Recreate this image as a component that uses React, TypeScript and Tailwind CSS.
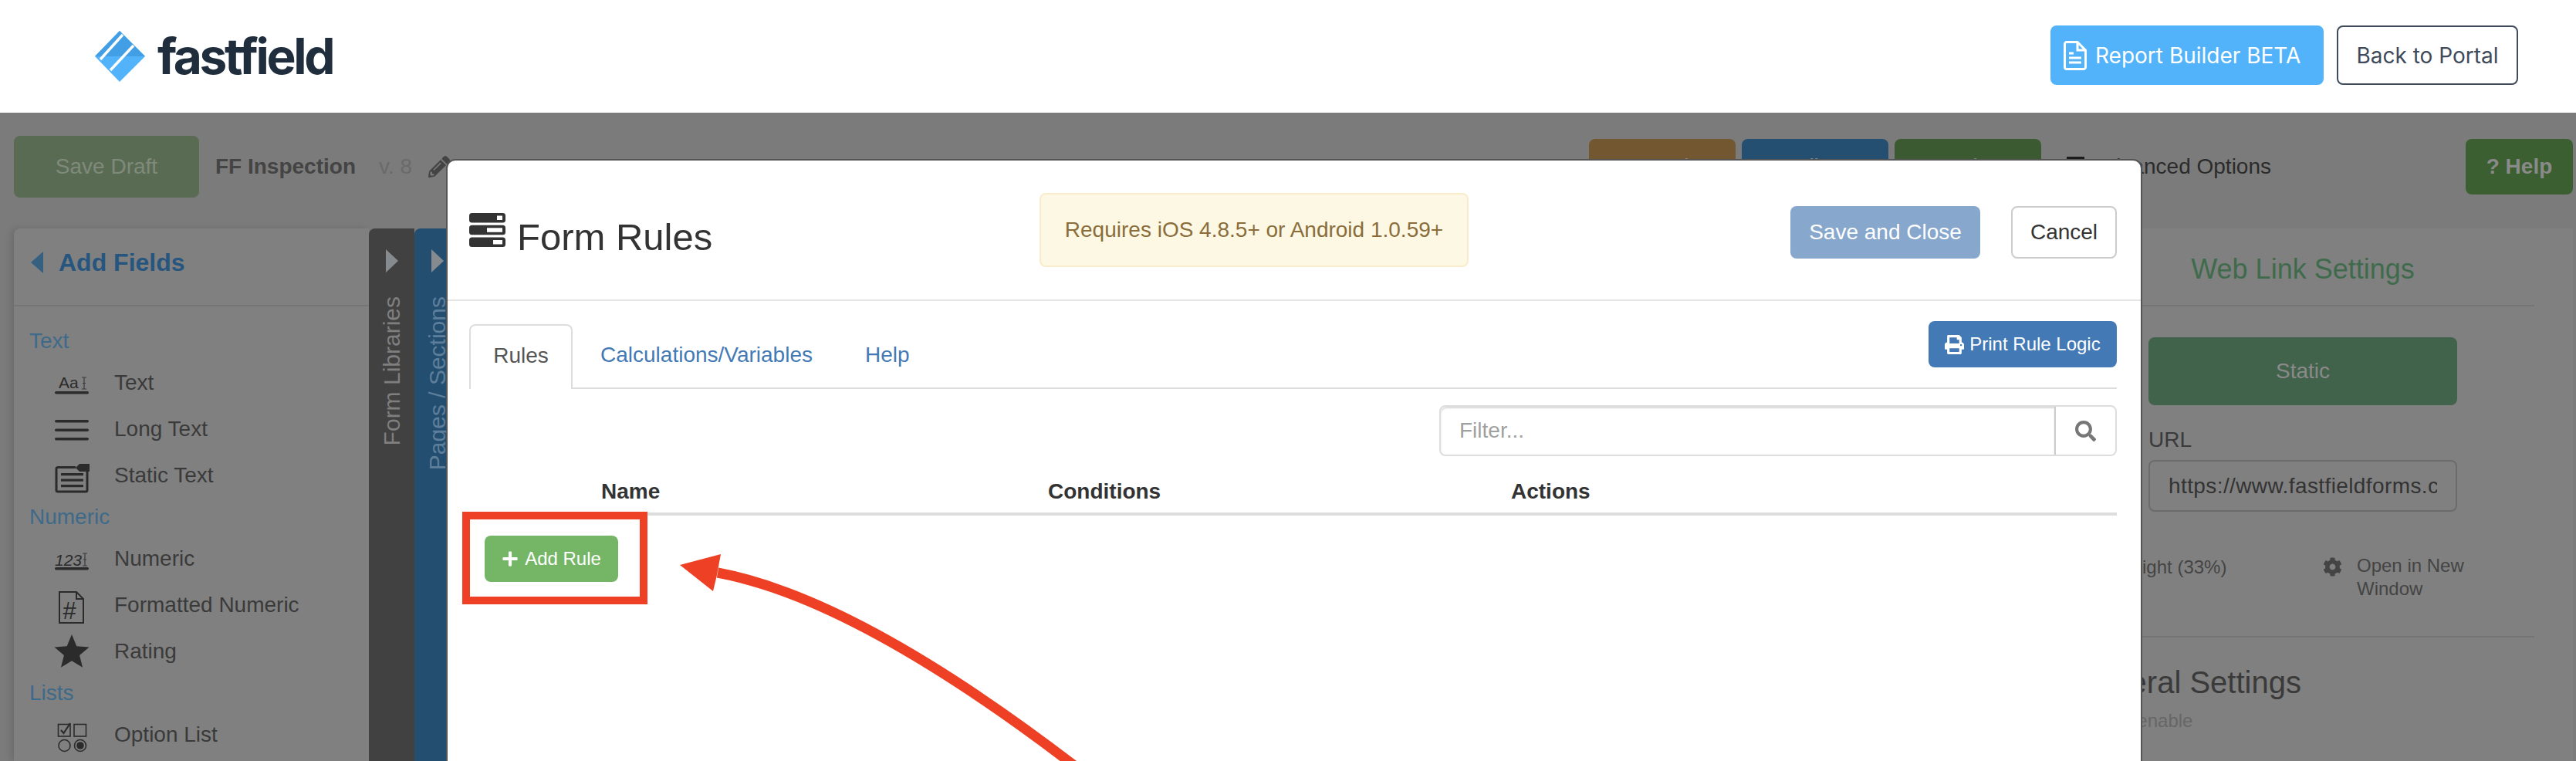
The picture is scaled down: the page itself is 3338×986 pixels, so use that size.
import { FC } from 'react';
import { FaCog, FaPencilAlt, FaPlus, FaPrint, FaSearch } from 'react-icons/fa';

type FieldIcon = 'aa' | 'lines' | 'static' | 'num' | 'hash' | 'star' | 'options';

const fieldGroups: { label: string; items: { name: string; icon: FieldIcon }[] }[] = [
  {
    label: 'Text',
    items: [
      { name: 'Text', icon: 'aa' },
      { name: 'Long Text', icon: 'lines' },
      { name: 'Static Text', icon: 'static' },
    ],
  },
  {
    label: 'Numeric',
    items: [
      { name: 'Numeric', icon: 'num' },
      { name: 'Formatted Numeric', icon: 'hash' },
      { name: 'Rating', icon: 'star' },
    ],
  },
  {
    label: 'Lists',
    items: [{ name: 'Option List', icon: 'options' }],
  },
];

const IBeam: FC<{ x: number; top: number; bottom: number }> = ({ x, top, bottom }) => (
  <path
    d={`M${x - 3} ${top}h6M${x} ${top}V${bottom}M${x - 3} ${bottom}h6M${x - 2} ${(top + bottom) / 2}h4`}
    stroke="#3a3a3a"
    strokeWidth="1.2"
    fill="none"
  />
);

const FieldGlyph: FC<{ icon: FieldIcon }> = ({ icon }) => (
  <svg width="48" height="48" viewBox="0 0 48 48" fill="#2b2b2b" className="shrink-0">
    {icon === 'aa' && (
      <>
        <text x="6" y="31" fontSize="21" fontFamily="Liberation Sans" fill="#2b2b2b">Aa</text>
        <IBeam x={39} top={17} bottom={32} />
        <rect x="1" y="35" width="44" height="3.6" rx="1.8" />
      </>
    )}
    {icon === 'lines' && (
      <>
        <rect x="1" y="12" width="44" height="3.6" rx="1.8" />
        <rect x="1" y="23.5" width="44" height="3.6" rx="1.8" />
        <rect x="1" y="35" width="44" height="3.6" rx="1.8" />
      </>
    )}
    {icon === 'static' && (
      <>
        <path d="M28 13.5H5a2 2 0 0 0-2 2V43a2 2 0 0 0 2 2h36a2 2 0 0 0 2-2V19" fill="none" stroke="#2b2b2b" strokeWidth="3" />
        <rect x="9" y="21" width="29" height="3.2" />
        <rect x="9" y="28.5" width="29" height="3.2" />
        <rect x="9" y="36" width="29" height="3.2" />
        <path d="M28 14l5-5h13v10H33z" />
      </>
    )}
    {icon === 'num' && (
      <>
        <text x="1" y="33" fontSize="21" fontStyle="italic" fontFamily="Liberation Sans" fill="#2b2b2b">123</text>
        <IBeam x={40} top={17} bottom={33} />
        <rect x="1" y="35" width="44" height="3.6" rx="1.8" />
      </>
    )}
    {icon === 'hash' && (
      <>
        <path d="M7 7h22l9 9v31H7zM29 7v9h9" fill="none" stroke="#2b2b2b" strokeWidth="2" />
        <text x="11" y="42" fontSize="31" fontStyle="italic" fontFamily="Liberation Sans" fill="#2b2b2b">#</text>
      </>
    )}
    {icon === 'star' && <path d="M23 2l6.3 15.2 16.2 1.2-12.4 10.5 3.9 15.9L23 36.3 9 44.8l3.9-15.9L.5 18.4l16.2-1.2z" />}
    {icon === 'options' && (
      <>
        <rect x="5.5" y="10.5" width="15.5" height="15.5" fill="none" stroke="#2b2b2b" strokeWidth="1.6" />
        <path d="M9 18l3.5 4L21 9" fill="none" stroke="#2b2b2b" strokeWidth="2.2" />
        <rect x="26" y="10.5" width="15.5" height="15.5" fill="none" stroke="#2b2b2b" strokeWidth="1.6" />
        <circle cx="13.5" cy="38" r="7.5" fill="none" stroke="#2b2b2b" strokeWidth="1.6" />
        <circle cx="34" cy="38" r="7.5" fill="none" stroke="#2b2b2b" strokeWidth="1.6" />
        <circle cx="34" cy="38" r="4.8" />
      </>
    )}
  </svg>
);

const Logo: FC = () => (
  <div className="flex items-center">
    <svg width="66" height="66" viewBox="0 0 66 66">
      <path d="M32 0 L65 33 L32 66 L0 33 Z" fill="#52b3fb" />
      <path d="M32 0 L65 33 L0 33 Z" fill="#429fe6" />
      <path d="M36 5 L7 37" stroke="#fff" strokeWidth="3.4" />
      <path d="M50 19 L20 51" stroke="#fff" strokeWidth="3.4" />
    </svg>
    <span className="ml-[15px] font-['Inter',sans-serif] text-[64px] leading-none font-bold tracking-[-3.4px] text-[#1f2d3d]">
      fastfield
    </span>
  </div>
);

const TasksIcon: FC = () => (
  <svg width="47" height="44" viewBox="0 0 47 44" fill="#333">
    <rect width="47" height="12.5" rx="3.5" />
    <rect y="15.8" width="47" height="12.5" rx="3.5" />
    <rect y="31.5" width="47" height="12.5" rx="3.5" />
    <rect x="36" y="3.5" width="7" height="5.5" fill="#fff" />
    <rect x="23" y="19.3" width="20" height="5.5" fill="#fff" />
    <rect x="31" y="35" width="12" height="5.5" fill="#fff" />
  </svg>
);

const Toolbar: FC = () => (
  <div className="flex h-[150px] items-center pr-[4px] pb-[10px] pl-[18px]">
    <button className="h-[80px] w-[240px] rounded-lg bg-[#5a6b54] text-[#7f8a7b]">Save Draft</button>
    <span className="ml-[21px] font-bold text-[#444]">FF Inspection</span>
    <span className="ml-[30px] text-[#6a6a6a]">v. 8</span>
    <FaPencilAlt className="ml-[21px] h-[28px] w-[28px] text-[#444]" />
    <div className="ml-auto flex items-center gap-[8px]">
      <button className="h-[72px] w-[190px] rounded-lg bg-[#735731] text-[#8d8d8d]">Properties</button>
      <button className="h-[72px] w-[190px] rounded-lg bg-[#244f70] text-[#8d8d8d]">Deliver</button>
      <button className="h-[72px] w-[190px] rounded-lg bg-[#3c5a32] text-[#8d8d8d]">Design</button>
    </div>
    <div className="ml-[33px] flex items-center text-[#2b2b2b]">
      <span className="-mt-[6px] h-[20px] w-[23px] border-t-[5px] border-[#1c1c1c]" />
      <span className="ml-[13px]">Advanced Options</span>
    </div>
    <button className="ml-[252px] h-[72px] w-[139px] rounded-lg bg-[#3b5f30] font-bold text-[#8a8a8a]">? Help</button>
  </div>
);

const FieldsPanel: FC = () => (
  <div className="w-[460px] shrink-0 rounded-tl-lg bg-[#808080] shadow-[-4px_0_8px_rgba(0,0,0,0.12)]">
    <div className="flex h-[101px] items-center border-b-2 border-[#757575] pb-[12px] pl-[22px] text-[#26567f]">
      <svg width="16" height="28" viewBox="0 0 16 28" fill="#35607f">
        <path d="M16 0v28L0 14z" />
      </svg>
      <span className="ml-[20px] text-[32px] font-bold">Add Fields</span>
    </div>
    <div className="pt-[21px] pl-[20px]">
      {fieldGroups.map(group => (
        <div key={group.label}>
          <div className="flex h-[48px] items-center text-[#3e6a8a]">{group.label}</div>
          {group.items.map(item => (
            <div key={item.name} className="flex h-[60px] items-center pl-[32px] text-[#3a3a3a]">
              <FieldGlyph icon={item.icon} />
              <span className="ml-[30px]">{item.name}</span>
            </div>
          ))}
        </div>
      ))}
    </div>
  </div>
);

const SideTab: FC<{ label: string; bg: string; text: string }> = ({ label, bg, text }) => (
  <div className={`flex w-[59px] shrink-0 flex-col items-center rounded-tl-lg pt-[27px] ${bg}`}>
    <svg width="16" height="30" viewBox="0 0 16 30" fill="#858b8f">
      <path d="M0 0v30l16-15z" />
    </svg>
    <span className={`mt-[31px] rotate-180 text-[30px] leading-none whitespace-nowrap [writing-mode:vertical-rl] ${text}`}>
      {label}
    </span>
  </div>
);

const SettingsPanel: FC = () => (
  <div className="mr-[4px] ml-auto w-[700px] shrink-0 bg-[#808080] px-[50px]">
    <div className="flex h-[101px] items-center justify-center border-b-2 border-[#757575] pt-[6px] text-[36px] text-[#3f6b4c]">
      Web Link Settings
    </div>
    <div className="border-b-2 border-[#757575] pb-[46px]">
      <div className="ml-[100px] w-[400px] pt-[40px]">
        <div className="flex h-[88px] items-center justify-center rounded-lg bg-[#41634b] text-[#8a8a8a]">Static</div>
        <div className="mt-[24px] text-[#3a3a3a]">URL</div>
        <div className="mt-[5px] flex h-[67px] items-center overflow-hidden rounded-lg border-2 border-[#6b6b6b] pl-[24px] whitespace-nowrap text-[#333]">
          <span className="w-[348px] overflow-hidden tracking-[0.4px]">https://www.fastfieldforms.com</span>
        </div>
      </div>
      <div className="mt-[55px] flex text-[24px] leading-[30px] text-[#444]">
        <div className="w-[326px] pt-[2px] pl-[16px]">Full Height (33%)</div>
        <FaCog className="mt-[4px] h-[25px] w-[25px]" />
        <div className="ml-[19px] w-[180px]">Open in New Window</div>
      </div>
    </div>
    <div className="mt-[33px] text-[40px] leading-[50px] text-[#3a3a3a]">General Settings</div>
    <div className="mt-[7px] text-[24px] text-[#666]">Click to enable</div>
  </div>
);

const FormRulesModal: FC = () => (
  <div className="absolute top-[60px] left-[578px] bottom-[-20px] w-[2198px] rounded-xl border-2 border-[#555] bg-white text-[#333]">
    <div className="flex h-[182px] items-center border-b-2 border-[#e5e5e5] pr-[31px] pl-[28px]">
      <div className="mt-[14px] flex w-[739px] items-center">
        <div className="-mt-[14px]">
          <TasksIcon />
        </div>
        <h3 className="mt-[4px] ml-[15px] text-[49px] leading-none">Form Rules</h3>
      </div>
      <div className="flex h-[96px] w-[556px] items-center justify-center rounded-lg border-2 border-[#faebcc] bg-[#fcf8e3] text-[#8a6d3b]">
        Requires iOS 4.8.5+ or Android 1.0.59+
      </div>
      <div className="mt-[5px] ml-auto flex gap-[40px]">
        <button className="h-[68px] w-[246px] rounded-lg bg-[#87a7cd] text-white">Save and Close</button>
        <button className="h-[68px] w-[137px] rounded-lg border-2 border-[#ccc] bg-white">Cancel</button>
      </div>
    </div>
    <div className="pr-[31px] pl-[28px]">
      <div className="mt-[30px] flex h-[84px] border-b-2 border-[#ddd]">
        <div className="flex h-[84px] w-[134px] items-center justify-center rounded-t-lg border-2 border-b-0 border-[#ddd] bg-white pb-[4px] text-[#555]">
          Rules
        </div>
        <div className="ml-[36px] flex h-[84px] items-center pb-[4px] text-[#4379b5]">Calculations/Variables</div>
        <div className="ml-[68px] flex h-[84px] items-center pb-[4px] text-[#4379b5]">Help</div>
        <button className="-mt-[4px] ml-auto flex h-[60px] w-[244px] items-center justify-center rounded-lg bg-[#4379b5] text-[24px] text-white">
          <FaPrint className="mr-[7px] h-[25px] w-[25px]" />
          Print Rule Logic
        </button>
      </div>
      <div className="mt-[21px] flex justify-end">
        <div className="flex h-[66px] w-[878px] rounded-lg border-2 border-[#ddd]">
          <div className="flex flex-1 items-center rounded-l-lg border-r-2 border-[#ccc] pl-[24px] text-[#a0a0a0] shadow-[inset_0_2px_2px_rgba(0,0,0,0.15)]">
            Filter...
          </div>
          <div className="flex w-[77px] items-center justify-center">
            <FaSearch className="h-[27px] w-[27px] text-[#777]" />
          </div>
        </div>
      </div>
      <div className="flex h-[77px] items-center border-b-4 border-[#ddd] pt-[18px] pl-[171px] font-bold">
        <div className="w-[579px]">Name</div>
        <div className="w-[600px]">Conditions</div>
        <div>Actions</div>
      </div>
      <div className="relative mt-[26px] ml-[20px] w-[173px]">
        <button className="flex h-[60px] w-[173px] items-center justify-center rounded-lg bg-[#74b666] text-[24px] text-white">
          <FaPlus className="mr-[8px] h-[22px] w-[22px]" />
          Add Rule
        </button>
        <div className="absolute -top-[31px] -left-[29px] h-[120px] w-[240px] border-[10px] border-[#ee4024]" />
      </div>
    </div>
  </div>
);

const App: FC = () => {
  return (
    <div className="relative h-[986px] w-[3338px] overflow-hidden bg-white font-['Liberation_Sans',sans-serif] text-[28px]">
      <header className="flex h-[146px] items-center bg-white pr-[75px] pl-[123px]">
        <Logo />
        <div className="-mt-[3px] ml-auto flex gap-[17px] font-['Inter',sans-serif] text-[28px]">
          <button className="flex h-[77px] w-[354px] items-center rounded-lg bg-[#52b3fb] pl-[17px] text-white">
            <svg width="30" height="38" viewBox="0 0 30 38" fill="none" stroke="#fff" strokeWidth="3">
              <path d="M4 1.5h14l10.5 10.5v22a2.5 2.5 0 0 1-2.5 2.5H4A2.5 2.5 0 0 1 1.5 34V4A2.5 2.5 0 0 1 4 1.5zM18 1.5V12h10.5" />
              <path d="M7 16h6M7 22h16M7 28h16" />
            </svg>
            <span className="ml-[11px]">Report Builder BETA</span>
          </button>
          <button className="h-[77px] w-[235px] rounded-lg border-2 border-[#3f4a5a] text-[#3f4a5a]">Back to Portal</button>
        </div>
      </header>
      <main className="relative h-[840px] overflow-hidden bg-[#7b7b7b]">
        <Toolbar />
        <div className="flex h-[690px] pl-[18px]">
          <FieldsPanel />
          <SideTab label="Form Libraries" bg="bg-[#414141]" text="text-[#7f7f7f]" />
          <SideTab label="Pages / Sections" bg="bg-[#244e6f]" text="text-[#5d7f9c]" />
          <SettingsPanel />
        </div>
        <FormRulesModal />
      </main>
      {/* annotation arrow on top of the screenshot */}
      <svg className="pointer-events-none absolute top-0 left-0" width="3338" height="986" viewBox="0 0 3338 986">
        <path d="M930 742Q1112 776 1400 998" fill="none" stroke="#ee4024" strokeWidth="13" />
        <path d="M881 732L934 718L929 745L924 766Z" fill="#ee4024" />
      </svg>
    </div>
  );
};

export default App;
